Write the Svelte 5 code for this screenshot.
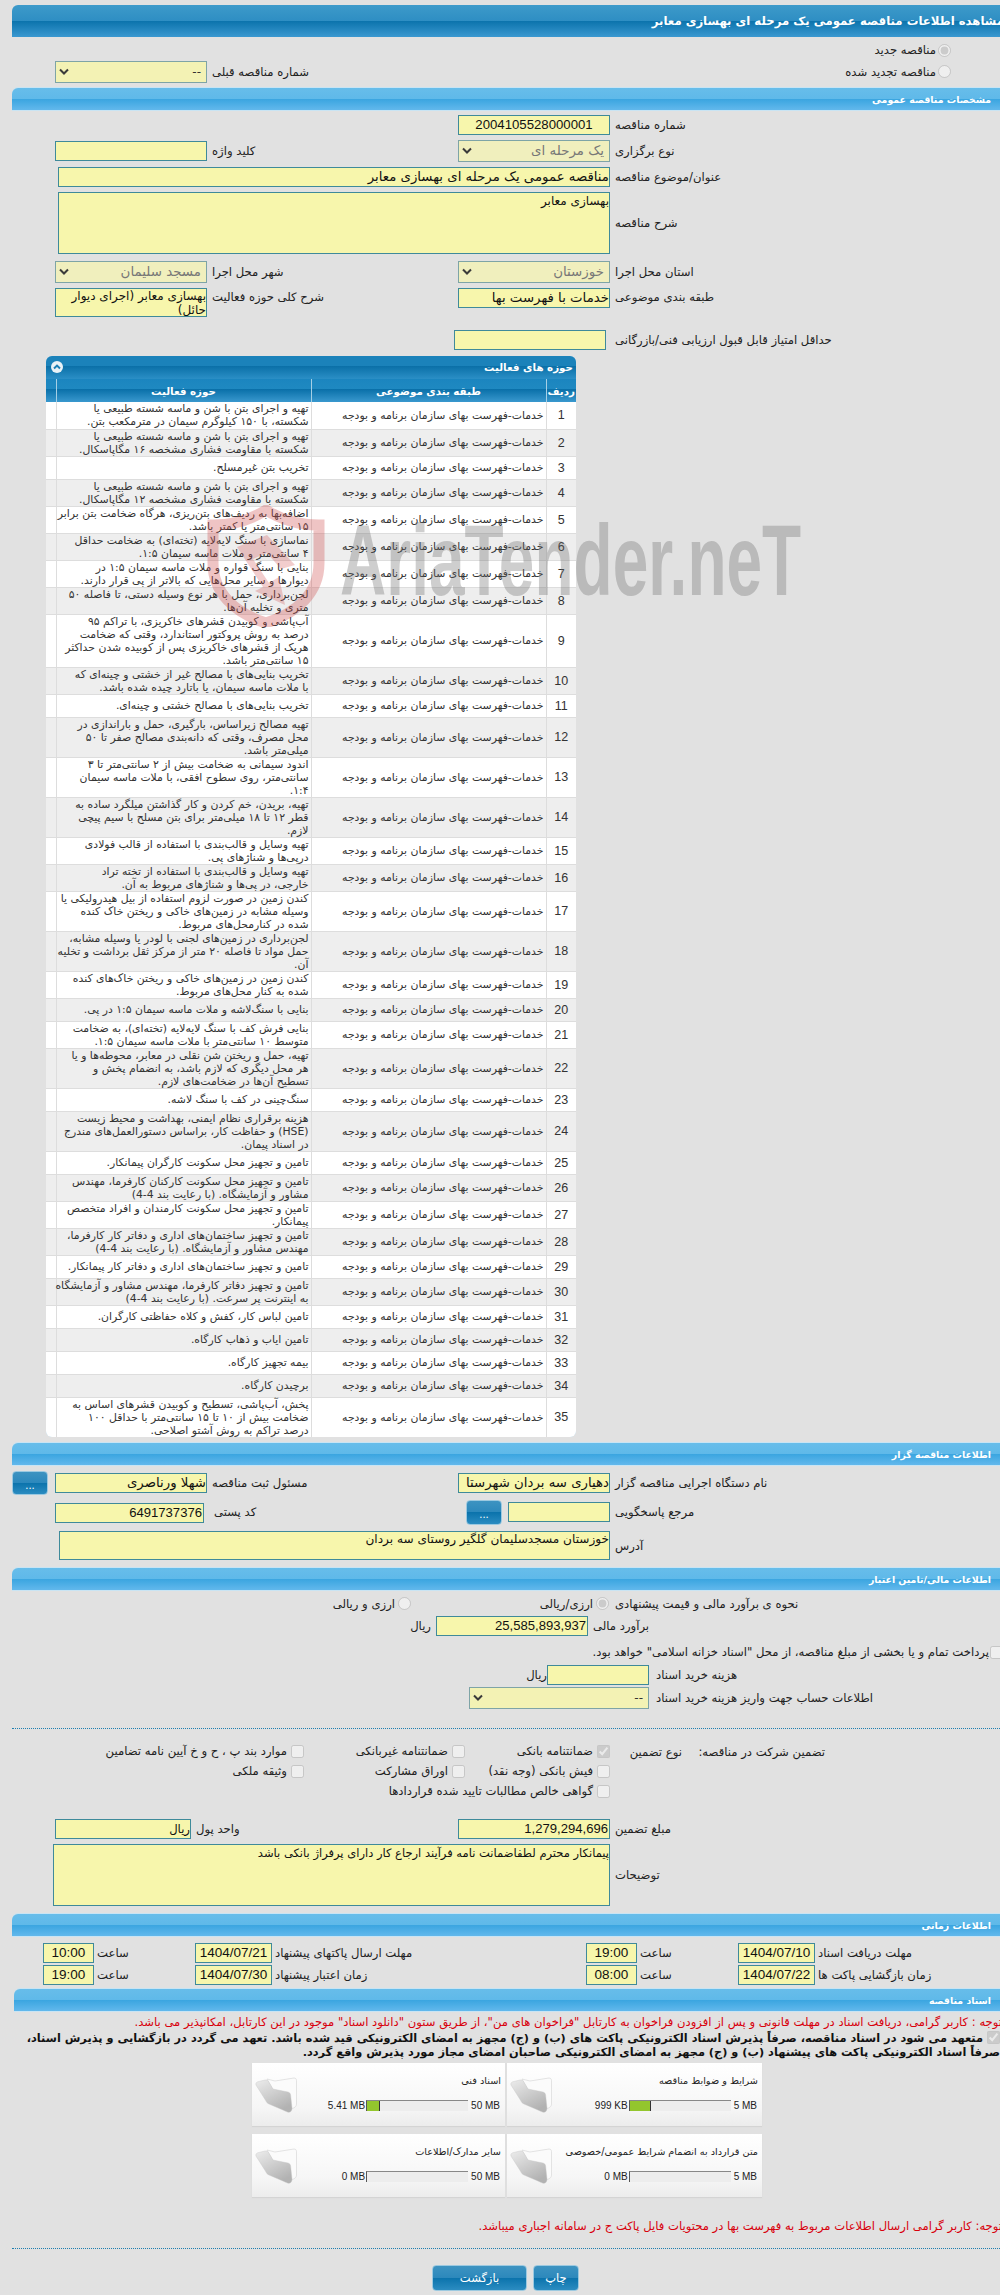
<script>
  const rows = [
    [2, 'تهیه و اجرای بتن با شن و ماسه شسته طبیعی یا', 'شکسته، با ۱۵۰ کیلوگرم سیمان در مترمکعب بتن.'],
    [2, 'تهیه و اجرای بتن با شن و ماسه شسته طبیعی یا', 'شکسته با مقاومت فشاری مشخصه ۱۶ مگاپاسکال.'],
    [1, 'تخریب بتن غیرمسلح.'],
    [2, 'تهیه و اجرای بتن با شن و ماسه شسته طبیعی یا', 'شکسته با مقاومت فشاری مشخصه ۱۲ مگاپاسکال.'],
    [2, 'اضافه‌بها به ردیف‌های بتن‌ریزی، هرگاه ضخامت بتن برابر', '۱۵ سانتی‌متر یا کمتر باشد.'],
    [2, 'نماسازی با سنگ لایه‌لایه (تخته‌ای) به ضخامت حداقل', '۴ سانتی‌متر و ملات ماسه سیمان ۱:۵.'],
    [2, 'بنایی با سنگ قواره و ملات ماسه سیمان ۱:۵ در', 'دیوارها و سایر محل‌هایی که بالاتر از پی قرار دارند.'],
    [2, 'لجن‌برداری، حمل با هر نوع وسیله دستی، تا فاصله ۵۰', 'متری و تخلیه آن‌ها.'],
    [4, 'آب‌پاشی و کوبیدن قشرهای خاکریزی، با تراکم ۹۵', 'درصد به روش پروکتور استاندارد، وقتی که ضخامت', 'هریک از قشرهای خاکریزی پس از کوبیده شدن حداکثر', '۱۵ سانتی‌متر باشد.'],
    [2, 'تخریب بنایی‌های با مصالح غیر از خشتی و چینه‌ای که', 'با ملات ماسه سیمان، یا باتارد چیده شده باشد.'],
    [1, 'تخریب بنایی‌های با مصالح خشتی و چینه‌ای.'],
    [3, 'تهیه مصالح زیراساس، بارگیری، حمل و باراندازی در', 'محل مصرف، وقتی که دانه‌بندی مصالح صفر تا ۵۰', 'میلی‌متر باشد.'],
    [3, 'اندود سیمانی به ضخامت بیش از ۲ سانتی‌متر تا ۳', 'سانتی‌متر، روی سطوح افقی، با ملات ماسه سیمان', '۱:۴.'],
    [3, 'تهیه، بریدن، خم کردن و کار گذاشتن میلگرد ساده به', 'قطر ۱۲ تا ۱۸ میلی‌متر برای بتن مسلح با سیم پیچی', 'لازم.'],
    [2, 'تهیه وسایل و قالب‌بندی با استفاده از قالب فولادی', 'درپی‌ها و شناژهای پی.'],
    [2, 'تهیه وسایل و قالب‌بندی با استفاده از تخته تراد', 'خارجی، در پی‌ها و شناژهای مربوط به آن.'],
    [3, 'کندن زمین در صورت لزوم استفاده از بیل هیدرولیکی یا', 'وسیله مشابه در زمین‌های خاکی و ریختن خاک کنده', 'شده در کنارمحل‌های مربوط.'],
    [3, 'لجن‌برداری در زمین‌های لجنی با لودر یا وسیله مشابه،', 'حمل مواد تا فاصله ۲۰ متر از مرکز ثقل برداشت و تخلیه', 'آن.'],
    [2, 'کندن زمین در زمین‌های خاکی و ریختن خاک‌های کنده', 'شده به کنار محل‌های مربوط.'],
    [1, 'بنایی با سنگ‌لاشه و ملات ماسه سیمان ۱:۵ در پی.'],
    [2, 'بنایی فرش کف با سنگ لایه‌لایه (تخته‌ای)، به ضخامت', 'متوسط ۱۰ سانتی‌متر با ملات ماسه سیمان ۱:۵.'],
    [3, 'تهیه، حمل و ریختن شن نقلی در معابر، محوطه‌ها و یا', 'هر محل دیگری که لازم باشد، به انضمام پخش و', 'تسطیح آن‌ها در ضخامت‌های لازم.'],
    [1, 'سنگ‌چینی در کف با سنگ لاشه.'],
    [3, 'هزینه برقراری نظام ایمنی، بهداشت و محیط زیست', '(HSE) و حفاظت کار، براساس دستورالعمل‌های مندرج', 'در اسناد پیمان.'],
    [1, 'تامین و تجهیز محل سکونت کارگران پیمانکار.'],
    [2, 'تامین و تجهیز محل سکونت کارکنان کارفرما، مهندس', 'مشاور و آزمایشگاه. (با رعایت بند 4-4)'],
    [2, 'تامین و تجهیز محل سکونت کارمندان و افراد متخصص', 'پیمانکار.'],
    [2, 'تامین و تجهیز ساختمان‌های اداری و دفاتر کار کارفرما،', 'مهندس مشاور و آزمایشگاه. (با رعایت بند 4-4)'],
    [1, 'تامین و تجهیز ساختمان‌های اداری و دفاتر کار پیمانکار.'],
    [2, 'تامین و تجهیز دفاتر کارفرما، مهندس مشاور و آزمایشگاه', 'به اینترنت پر سرعت. (با رعایت بند 4-4)'],
    [1, 'تامین لباس کار، کفش و کلاه حفاظتی کارگران.'],
    [1, 'تامین ایاب و ذهاب کارگاه.'],
    [1, 'بیمه تجهیز کارگاه.'],
    [1, 'برچیدن کارگاه.'],
    [3, 'پخش، آب‌پاشی، تسطیح و کوبیدن قشرهای اساس به', 'ضخامت بیش از ۱۰ تا ۱۵ سانتی‌متر با حداقل ۱۰۰', 'درصد تراکم به روش آشتو اصلاحی.']
  ];
  const docs = [
    { title: 'اسناد فنی', used: '5.41 MB', max: '50 MB', fill: 'f12' },
    { title: 'شرایط و ضوابط مناقصه', used: '999 KB', max: '5 MB', fill: 'f20' },
    { title: 'سایر مدارک/اطلاعات', used: '0 MB', max: '50 MB', fill: '' },
    { title: 'متن قرارداد به انضمام شرایط عمومی/خصوصی', used: '0 MB', max: '5 MB', fill: '' }
  ];
</script>

<div class="page">
  <div class="title">مشاهده اطلاعات مناقصه عمومی یک مرحله ای بهسازی معابر</div>

  <div class="radio-row"><input type="radio" disabled checked /><span class="lab">مناقصه جدید</span></div>
  <div class="frow r2">
    <div class="cell"><div class="sel">--<svg class="chev" viewBox="0 0 10 6"><path d="M1 1l4 4 4-4" /></svg></div><span class="lab">شماره مناقصه قبلی</span></div>
    <div class="cell radio-cell"><input type="radio" disabled /><span class="lab">مناقصه تجدید شده</span></div>
  </div>

  <div class="bar mt6">مشخصات مناقصه عمومی</div>

  <div class="frow mt5">
    <div class="cell"></div>
    <div class="cell"><div class="inp num">2004105528000001</div><span class="lab">شماره مناقصه</span></div>
  </div>
  <div class="frow mt5 h22">
    <div class="cell"><div class="inp"></div><span class="lab">کلید واژه</span></div>
    <div class="cell"><div class="sel dis">یک مرحله ای<svg class="chev" viewBox="0 0 10 6"><path d="M1 1l4 4 4-4" /></svg></div><span class="lab">نوع برگزاری</span></div>
  </div>
  <div class="frow wide mt5">
    <div class="inp w552 big">مناقصه عمومی یک مرحله ای بهسازی معابر</div><span class="lab">عنوان/موضوع مناقصه</span>
  </div>
  <div class="frow wide mt5 tall">
    <div class="inp w552 ta">بهسازی معابر</div><span class="lab">شرح مناقصه</span>
  </div>
  <div class="frow mt7 h22">
    <div class="cell"><div class="sel dis">مسجد سلیمان<svg class="chev" viewBox="0 0 10 6"><path d="M1 1l4 4 4-4" /></svg></div><span class="lab">شهر محل اجرا</span></div>
    <div class="cell"><div class="sel dis">خوزستان<svg class="chev" viewBox="0 0 10 6"><path d="M1 1l4 4 4-4" /></svg></div><span class="lab">استان محل اجرا</span></div>
  </div>
  <div class="frow mt5 h29">
    <div class="cell top"><div class="inp ta2">بهسازی معابر (اجرای دیوار<br />حائل)</div><span class="lab up">شرح کلی حوزه فعالیت</span></div>
    <div class="cell top"><div class="inp big">خدمات با فهرست بها</div><span class="lab up">طبقه بندی موضوعی</span></div>
  </div>
  <div class="frow mt13">
    <div class="cell"></div>
    <div class="cell"><div class="inp shift"></div><span class="lab">حداقل امتیاز قابل قبول ارزیابی فنی/بازرگانی</span></div>
  </div>

  <div class="panel">
    <div class="cap">
      <span>حوزه های فعالیت</span>
      <svg class="collapse" viewBox="0 0 12 12"><circle cx="6" cy="6" r="6" fill="#e9f2f7" /><path d="M3 7.5L6 4.6 9 7.5" fill="none" stroke="#1c7fb5" stroke-width="2" /></svg>
    </div>
    <table>
      <colgroup><col class="c0" /><col class="c1" /><col class="c2" /><col class="c3" /></colgroup>
      <thead><tr><th></th><th>حوزه فعالیت</th><th>طبقه بندی موضوعی</th><th>ردیف</th></tr></thead>
      <tbody>
        {#each rows as r, i}
          <tr class="l{r[0]}" class:alt={i % 2 === 1}>
            <td></td>
            <td class="act">{#each r.slice(1) as line}<div>{line}</div>{/each}</td>
            <td class="cat">خدمات-فهرست بهای سازمان برنامه و بودجه</td>
            <td class="idx">{i + 1}</td>
          </tr>
        {/each}
      </tbody>
    </table>
  </div>

  <div class="bar mt6">اطلاعات مناقصه گزار</div>
  <div class="frow mt8 btnrow">
    <button class="more m1">...</button>
    <div class="cell"><div class="inp big">شهلا ورناصری</div><span class="lab">مسئول ثبت مناقصه</span></div>
    <div class="cell"><div class="inp big">دهیاری سه بردان شهرستا</div><span class="lab">نام دستگاه اجرایی مناقصه گزار</span></div>
  </div>
  <div class="frow mt8 h22">
    <div class="cell"><div class="inp w149 dn2 num2">6491737376</div><span class="lab pc">کد پستی</span></div>
    <div class="cell gap6"><button class="more m2">...</button><div class="inp w102"></div><span class="lab">مرجع پاسخگویی</span></div>
  </div>
  <div class="frow wide2 mt8 h29">
    <div class="inp w551 ta3">خوزستان مسجدسلیمان گلگیر روستای سه بردان</div><span class="lab">آدرس</span>
  </div>

  <div class="bar mt8">اطلاعات مالی/تامین اعتبار</div>
  <div class="fin-radio">
    <div class="ritem r-b"><input type="radio" disabled /><span class="lab">ارزی و ریالی</span></div>
    <div class="ritem r-a"><input type="radio" disabled checked /><span class="lab">ارزی/ریالی</span></div>
    <span class="lab">نحوه ی برآورد مالی و قیمت پیشنهادی</span>
  </div>
  <div class="line est">
    <span class="lab rial">ریال</span><div class="inp num3">25,585,893,937</div><span class="lab">برآورد مالی</span>
  </div>
  <div class="treasury"><span class="lab">پرداخت تمام و یا بخشی از مبلغ مناقصه، از محل "اسناد خزانه اسلامی" خواهد بود.</span><input type="checkbox" disabled /></div>
  <div class="line cost">
    <span class="lab rial2">ریال</span><div class="inp w102 gapr"></div><span class="lab">هزینه خرید اسناد</span>
  </div>
  <div class="line acct">
    <div class="sel w180">--<svg class="chev" viewBox="0 0 10 6"><path d="M1 1l4 4 4-4" /></svg></div><span class="lab">اطلاعات حساب جهت واریز هزینه خرید اسناد</span>
  </div>

  <div class="dots d1"></div>

  <div class="guar" dir="rtl">
    <span class="lab g1">تضمین شرکت در مناقصه:</span>
    <span class="lab g2">نوع تضمین</span>
    <label class="ck c-a"><input type="checkbox" disabled checked /><span>ضمانتنامه بانکی</span></label>
    <label class="ck c-b"><input type="checkbox" disabled /><span>ضمانتنامه غیربانکی</span></label>
    <label class="ck c-c"><input type="checkbox" disabled /><span>موارد بند پ ، ح و خ آیین نامه تضامین</span></label>
    <label class="ck c-a"><input type="checkbox" disabled /><span>فیش بانکی (وجه نقد)</span></label>
    <label class="ck c-b"><input type="checkbox" disabled /><span>اوراق مشارکت</span></label>
    <label class="ck c-c"><input type="checkbox" disabled /><span>وثیقه ملکی</span></label>
    <label class="ck c-wide"><input type="checkbox" disabled /><span>گواهی خالص مطالبات تایید شده قراردادها</span></label>
  </div>

  <div class="frow mt16">
    <div class="cell"><div class="inp w136">ریال</div><span class="lab">واحد پول</span></div>
    <div class="cell"><div class="inp num4">1,279,294,696</div><span class="lab">مبلغ تضمین</span></div>
  </div>
  <div class="frow wide3 mt5 tall">
    <div class="inp w557 ta note">پیمانکار محترم لطفاضمانت نامه فرآیند ارجاع کار دارای پرفراژ بانکی باشد</div><span class="lab">توضیحات</span>
  </div>

  <div class="bar mt8">اطلاعات زمانی</div>
  <div class="dates mt7">
    <div class="cell2"><div class="inp t">10:00</div><span class="lab">ساعت</span></div>
    <div class="cell2"><div class="inp d">1404/07/21</div><span class="lab">مهلت ارسال پاکتهای پیشنهاد</span></div>
    <div class="cell2"><div class="inp t">19:00</div><span class="lab">ساعت</span></div>
    <div class="cell2"><div class="inp d">1404/07/10</div><span class="lab">مهلت دریافت اسناد</span></div>
  </div>
  <div class="dates mt2">
    <div class="cell2"><div class="inp t">19:00</div><span class="lab">ساعت</span></div>
    <div class="cell2"><div class="inp d">1404/07/30</div><span class="lab">زمان اعتبار پیشنهاد</span></div>
    <div class="cell2"><div class="inp t">08:00</div><span class="lab">ساعت</span></div>
    <div class="cell2"><div class="inp d">1404/07/22</div><span class="lab">زمان بازگشایی پاکت ها</span></div>
  </div>

  <div class="bar b6">اسناد مناقصه</div>
  <div class="red r1" dir="rtl">توجه : کاربر گرامی، دریافت اسناد در مهلت قانونی و پس از افزودن فراخوان به کارتابل "فراخوان های من"، از طریق ستون "دانلود اسناد" موجود در این کارتابل، امکانپذیر می باشد.</div>
  <div class="pledge" dir="rtl">
    <div><input type="checkbox" disabled checked />متعهد می شود در اسناد مناقصه، صرفاً پذیرش اسناد الکترونیکی پاکت های (ب) و (ج) مجهز به امضای الکترونیکی قید شده باشد. تعهد می گردد در بازگشایی و پذیرش اسناد،</div>
    <div>صرفاً اسناد الکترونیکی پاکت های پیشنهاد (ب) و (ج) مجهز به امضای الکترونیکی صاحبان امضای مجاز مورد پذیرش واقع گردد.</div>
  </div>

  <div class="docs">
    {#each docs as d}
      <div class="doc">
        <svg class="folder" viewBox="0 0 42 36">
          <defs>
            <linearGradient id="fg" x1="0" y1="0" x2="0.6" y2="1"><stop offset="0" stop-color="#ececec" /><stop offset="1" stop-color="#b2b2b2" /></linearGradient>
          </defs>
          <path d="M12 2l8 2 19-3c1.500 0 2.500 1 2.500 2.500V27c0 2-1 3-3 4L30 34z" fill="#fbfbfb" stroke="#d8d8d8" stroke-width=".7" />
          <path d="M1 8c-.6-1.500.4-3 2-3.300L10 3c1.500-.3 2.500 .3 3.500 1.500L18 12l15 3c1.500.4 2.500 1.500 2.600 3L37 31c.2 3-2 5-4.500 4L14 27c-1.500-.7-2.500-1.700-3-3z" fill="url(#fg)" stroke="#c4c4c4" stroke-width=".4" />
        </svg>
        <div class="doc-b">
          <div class="doc-t" dir="rtl">{d.title}</div>
          <div class="doc-m">
            <span class="used">{d.used}</span>
            <div class="track"><div class="fill {d.fill}"></div></div>
            <span class="max">{d.max}</span>
          </div>
        </div>
      </div>
    {/each}
  </div>

  <div class="red r2" dir="rtl">توجه: کاربر گرامی ارسال اطلاعات مربوط به فهرست بها در محتویات فایل پاکت ج در سامانه اجباری میباشد.</div>
  <div class="dots d2"></div>
  <div class="actions">
    <button class="act-btn back">بازگشت</button>
    <button class="act-btn print">چاپ</button>
  </div>

  <div class="wm">AriaTender.neT</div>
  <svg class="shield" viewBox="0 0 118 122">
    <path d="M59 5C42 16 24 20 6 20v38c0 30 22 50 53 60 31-10 53-30 53-60V20C94 20 76 16 59 5z" fill="none" stroke="#cf4b4b" stroke-opacity=".33" stroke-width="11" />
    <path d="M30 42l30-12 28 30-14 4-14-16-14 6 16 24 10-6 6 28-30-14 8-4z" fill="#cf4b4b" fill-opacity=".28" />
  </svg>
</div>

<style>
  :global(body) { margin: 0; background: #e1e1e1; }
  .page {
    position: relative;
    width: 1000px;
    height: 2295px;
    overflow: hidden;
    padding-top: 5px;
    box-sizing: border-box;
    background: #e1e1e1;
    font-family: "DejaVu Sans", sans-serif;
    font-size: 11.65px;
    color: #222;
  }
  .title {
    margin: 0 -4px 0 12px;
    height: 32px;
    line-height: 32px;
    direction: rtl;
    white-space: nowrap;
    color: #fff;
    font-weight: bold;
    font-size: 11.7px;
    border-radius: 6px 0 0 0;
    background: linear-gradient(#3d9aca 0, #2e8ec3 50%, #0b73ac 50%, #3a98d0 100%);
    overflow: hidden;
  }
  .bar {
    margin-left: 12px;
    height: 22px;
    line-height: 23px;
    direction: rtl;
    padding-right: 9px;
    color: #fff;
    font-weight: bold;
    font-size: 9.4px;
    white-space: nowrap;
    border-radius: 6px 0 0 0;
    background: linear-gradient(#67bdea 0, #5fb9e9 50%, #3aa5e0 50%, #62b8ec 100%);
    box-shadow: 0 1px 0 #c9e4f3, 0 -1px 0 #c9e4f3;
  }
  .radio-row {
    margin-top: 4px;
    height: 18px;
    padding-right: 49px;
    direction: rtl;
    display: flex;
    align-items: center;
    gap: 2px;
  }
  input[type="radio"], input[type="checkbox"] { margin: 0; width: 13px; height: 13px; flex: none; }
  .lab { direction: rtl; white-space: nowrap; line-height: 14px; }
  .frow { display: flex; padding-left: 55px; align-items: center; height: 20px; }
  .cell { width: 403px; flex: none; display: flex; gap: 5px; align-items: center; height: 100%; }
  .cell + .cell { width: 542px; }
  .cell.top { align-items: flex-start; }
  .up { margin-top: 2px; }
  .r2 { height: 21px; margin-top: 2px; }
  .radio-cell { gap: 2px; direction: rtl; padding-right: 49px; box-sizing: border-box; }
  .h22 { height: 22px; }
  .h29 { height: 29px; }
  .tall { height: 62px; }
  .mt2 { margin-top: 2px; }
  .mt5 { margin-top: 5px; }
  .mt6 { margin-top: 6px; }
  .mt7 { margin-top: 7px; }
  .mt8 { margin-top: 8px; }
  .mt13 { margin-top: 13px; }
  .mt16 { margin-top: 16px; }
  .inp, .sel {
    box-sizing: border-box;
    width: 152px;
    height: 20px;
    flex: none;
    background: #f7f6ac;
    border: 1px solid #3f8a9a;
    direction: rtl;
    white-space: nowrap;
    overflow: hidden;
    line-height: 18px;
    color: #111;
  }
  .sel {
    position: relative;
    height: 22px;
    line-height: 20px;
    border-color: #7ea4a6;
    background: #f3f2b4;
    padding-right: 5px;
    color: #333;
    font-size: 12px;
  }
  .sel.dis { color: #777; background: #f0efbd; font-size: 13.4px; }
  .big { font-size: 13.3px; }
  .chev { position: absolute; left: 3px; top: 6px; width: 10px; height: 7px; fill: none; stroke: #3a3a3a; stroke-width: 2; }
  .num { font-family: "Liberation Sans", sans-serif; font-size: 13.2px; text-align: center; direction: ltr; }
  .wide { padding-left: 58px; gap: 5px; }
  .wide2 { padding-left: 59px; gap: 5px; }
  .wide3 { padding-left: 53px; gap: 5px; }
  .w552 { width: 552px; }
  .w551 { width: 551px; }
  .w557 { width: 557px; }
  .w102 { width: 102px; }
  .w136 { width: 136px; }
  .w149 { width: 149px; }
  .w180 { width: 180px; }
  .inp.ta { height: 62px; white-space: normal; font-size: 12px; line-height: 17px; }
  .inp.note { font-size: 11.5px; }
  .inp.ta2 { height: 29px; white-space: normal; line-height: 14px; font-size: 12px; }
  .inp.ta3 { height: 29px; white-space: normal; line-height: 15px; font-size: 12.1px; }
  .shift { margin-left: -4px; margin-right: 4px; }

  .panel {
    margin: 6px 0 0 46px;
    width: 530px;
    height: 1081px;
    box-sizing: border-box;
    border-radius: 6px;
    overflow: hidden;
    background: #dcebf5;
    box-shadow: inset 0 0 0 1px #b4d6ea;
  }
  .cap {
    height: 23px;
    position: relative;
    line-height: 23px;
    direction: rtl;
    padding-right: 3px;
    color: #fff;
    font-weight: bold;
    font-size: 10.3px;
    background: linear-gradient(#1b82ba 0, #1b82ba 45%, #0b70a8 45%, #2b8fc6 100%);
  }
  .collapse { position: absolute; left: 5px; top: 5px; width: 12px; height: 12px; }
  table { border-collapse: collapse; table-layout: fixed; width: 530px; }
  .c0 { width: 10px; }
  .c1 { width: 255px; }
  .c2 { width: 235px; }
  .c3 { width: 30px; }
  thead tr { height: 23px; background: linear-gradient(#1b85bf 0, #1f89c1 45%, #0a70a9 45%, #3998ce 100%); }
  th { color: #fff; font-weight: bold; font-size: 10.3px; padding: 0; border-left: 1px solid #a5cfe5; direction: rtl; }
  th:first-child { border-left: 0; }
  tbody tr { background: #fff; }
  tbody tr.alt { background: #eee; }
  td { padding: 0 2px; border: 1px solid #ddd; border-width: 0 0 1px 1px; direction: rtl; color: #333; }
  td:first-child { border-left: 0; padding: 0; }
  .l1 { height: 23px; }
  .l2 { height: 27px; }
  .l3 { height: 40px; }
  .l4 { height: 53px; }
  .act { line-height: 13px; font-size: 10.85px; white-space: nowrap; }
  .cat { font-size: 10.85px; white-space: nowrap; text-align: right; }
  .idx { font-family: "Liberation Sans", sans-serif; font-size: 12.5px; text-align: center; }

  .btnrow { padding-left: 12px; }
  .more + .cell { margin-left: 7px; }
  .more {
    width: 36px;
    height: 24px;
    flex: none;
    padding: 6px 0 0;
    border: 1px solid #9cc9e0;
    border-radius: 4px;
    color: #fff;
    font-size: 10px;
    line-height: 14px;
    font-family: inherit;
    background: linear-gradient(#3d93c1 0, #2c88bc 50%, #0b73ac 50%, #2b8cc1 100%);
  }
  .m1 { margin-top: -1px; }
  .m2 { height: 25px; }
  .gap6 { gap: 6px; padding-left: 8px; box-sizing: border-box; }
  .gap6 .lab { margin-left: -1px; }
  .dn2 { margin-top: 2px; }
  .pc { margin-left: 5px; }
  .num2, .num3, .num4 { font-family: "Liberation Sans", sans-serif; font-size: 13.1px; padding-right: 1px; }

  .fin-radio { margin-top: 6px; height: 15px; position: relative; padding-left: 615px; display: flex; align-items: center; }
  .ritem { position: absolute; top: 0; display: flex; flex-direction: row-reverse; gap: 3px; align-items: center; height: 15px; }
  .r-a { right: 391px; }
  .r-b { right: 589px; }
  .line { display: flex; align-items: center; height: 20px; gap: 5px; }
  .est { margin-top: 5px; padding-left: 413px; }
  .rial { width: 18px; }
  .treasury {
    margin: 8px -3px 0 0;
    height: 16px;
    display: flex;
    justify-content: flex-end;
    align-items: center;
    gap: 1px;
  }
  .cost { margin-top: 5px; padding-left: 527px; gap: 0; }
  .rial2 { width: 20px; }
  .gapr { margin-right: 7px; }
  .acct { margin-top: 2px; height: 22px; padding-left: 469px; gap: 7px; }
  .dots { margin-left: 12px; border-top: 1px dotted #1f7fb0; height: 0; }
  .d1 { margin-top: 19px; }
  .guar {
    margin-top: 14px;
    display: grid;
    grid-template-columns: 175px 143px 72px 145px 161px 1fr;
    grid-auto-rows: 20px;
    align-items: start;
  }
  .g1 { grid-column: 2; grid-row: 1; margin-top: 2px; }
  .g2 { grid-column: 3; grid-row: 1; margin-top: 2px; }
  .ck { display: flex; gap: 4px; align-items: center; white-space: nowrap; height: 16px; }
  .c-a { grid-column: 4; }
  .c-b { grid-column: 5; }
  .c-c { grid-column: 6; }
  .c-wide { grid-column: 4 / 7; }
  .num4 { text-align: right; }
  .dates { display: grid; grid-template-columns: 152px 391px 152px 1fr; padding-left: 43px; height: 20px; }
  .cell2 { display: flex; gap: 3px; align-items: center; }
  .inp.t, .inp.d { font-family: "Liberation Sans", sans-serif; font-size: 13.5px; text-align: center; direction: ltr; }
  .inp.t { width: 51px; }
  .inp.d { width: 77px; }
  .b6 { margin: 4px 0 0 14px; }
  .red { color: #d8000c; white-space: nowrap; font-size: 11.6px; line-height: 15px; height: 15px; margin-right: -2px; }
  .r1 { margin-top: 4px; }
  .pledge { margin-top: 1px; height: 28px; font-weight: bold; line-height: 14px; white-space: nowrap; font-size: 11.35px; color: #111; }
  .pledge input { margin: 0 0 0 4px; vertical-align: -2px; }
  .docs { margin: 4px 0 0 252px; width: 510px; display: grid; grid-template-columns: 253px 255px; gap: 8px 2px; }
  .doc {
    height: 63px;
    display: flex;
    background: linear-gradient(#fff, #f6f6f6 70%, #ececec);
    box-shadow: 0 1px 1px #d4d4d4;
  }
  .folder { width: 42px; height: 36px; margin: 14px 0 0 3px; flex: none; }
  .doc-b { flex: 1; min-width: 0; padding-right: 4px; }
  .doc-t { margin-top: 11px; height: 14px; line-height: 14px; font-size: 9.7px; white-space: nowrap; }
  .doc-m { display: flex; justify-content: flex-end; align-items: center; margin: 12px 1px 0 0; height: 11px; gap: 3px; font-family: "Liberation Sans", sans-serif; font-size: 10px; white-space: nowrap; }
  .used { margin-right: -2px; }
  .track { width: 102px; height: 11px; flex: none; background: #ededed; border-top: 1px solid #888; border-left: 1px solid #555; box-sizing: border-box; }
  .fill { width: 0; height: 100%; background: #93c62d; }
  .f12 { width: 12px; border-right: 1px solid #333; }
  .f20 { width: 20px; border-right: 1px solid #333; }
  .red.r2 { margin-top: 22px; }
  .d2 { margin-top: 14px; }
  .actions { margin: 16px 0 0 432px; display: flex; gap: 6px; }
  .act-btn {
    height: 26px;
    border: 1px solid #9cc9e0;
    border-radius: 4px;
    color: #fff;
    font-family: inherit;
    font-size: 11.5px;
    padding: 0;
    background: linear-gradient(#3d93c1 0, #2c88bc 50%, #0b73ac 50%, #2b8cc1 100%);
  }
  .back { width: 95px; }
  .print { width: 46px; }

  .wm {
    position: absolute;
    left: 340px;
    top: 505px;
    font: bold 100px/110px "Liberation Sans", sans-serif;
    color: rgba(105, 105, 105, 0.33);
    white-space: nowrap;
    transform: scaleX(0.64);
    transform-origin: left top;
    pointer-events: none;
  }
  .shield { position: absolute; left: 207px; top: 505px; width: 118px; height: 122px; pointer-events: none; }
</style>
